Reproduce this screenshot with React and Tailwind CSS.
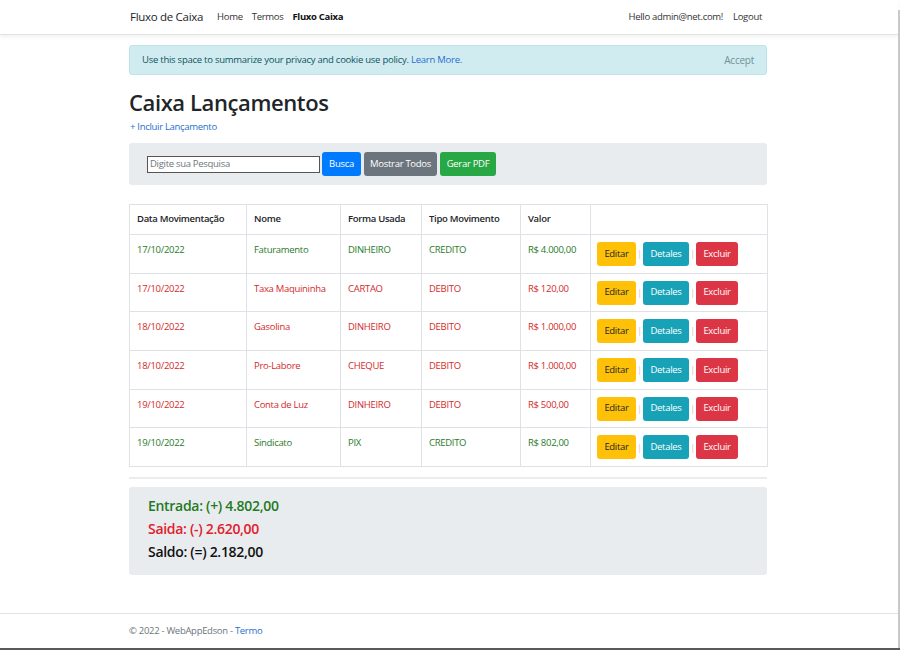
import React from "react";

const rows = [
  { d: "17/10/2022", n: "Faturamento", f: "DINHEIRO", t: "CREDITO", v: "R$ 4.000,00", c: true },
  { d: "17/10/2022", n: "Taxa Maquininha", f: "CARTAO", t: "DEBITO", v: "R$ 120,00", c: false },
  { d: "18/10/2022", n: "Gasolina", f: "DINHEIRO", t: "DEBITO", v: "R$ 1.000,00", c: false },
  { d: "18/10/2022", n: "Pro-Labore", f: "CHEQUE", t: "DEBITO", v: "R$ 1.000,00", c: false },
  { d: "19/10/2022", n: "Conta de Luz", f: "DINHEIRO", t: "DEBITO", v: "R$ 500,00", c: false },
  { d: "19/10/2022", n: "Sindicato", f: "PIX", t: "CREDITO", v: "R$ 802,00", c: true },
];

export default function App() {
  return (
    <div className="w-[900px] h-[650px] flex flex-col bg-white overflow-hidden text-[#212529]" style={{ fontFamily: '"Open Sans", "Noto Sans", sans-serif' }}>
      <div className="flex flex-1 min-h-0">
        <div className="flex-1 flex flex-col min-w-0">
          <nav className="h-[35px] shrink-0 border-b border-[#e3e3e3] shadow-[0_2px_4px_rgba(0,0,0,0.06)] bg-white">
            <div className="w-[638px] ml-[129px] h-full flex items-center">
              <span className="text-[11.5px] tracking-[-0.3px] text-[#212529] ml-px">Fluxo de Caixa</span>
              <div className="flex items-center gap-[9px] ml-[14px] text-[9.5px] tracking-[-0.3px]">
                <span className="text-[#333]">Home</span>
                <span className="text-[#333]">Termos</span>
                <span className="font-bold text-[#111]">Fluxo Caixa</span>
              </div>
              <div className="ml-auto flex items-center gap-[10px] text-[9.5px] tracking-[-0.3px] mr-[5px]">
                <span className="text-[#333]">Hello admin@net.com!</span>
                <span className="text-[#333]">Logout</span>
              </div>
            </div>
          </nav>

          <main className="w-[638px] ml-[129px] flex flex-col">
            <div className="mt-[10px] h-[30px] rounded-[3px] bg-[#d1ecf1] border border-[#bee5eb] flex items-center px-[12px] text-[9.5px] tracking-[-0.25px] text-[#0c5460]">
              <span>
                Use this space to summarize your privacy and cookie use policy.{" "}
                <span className="text-[#1f6fcf]">Learn More.</span>
              </span>
              <span className="ml-auto text-[#6e9196] text-[10px]">Accept</span>
            </div>

            <h1 className="mt-[12px] text-[22px] leading-[30px] font-semibold tracking-[-0.4px] text-[#212529]">Caixa Lançamentos</h1>
            <span className="mt-[2px] text-[9.5px] leading-[15px] text-[#1f6fcf] tracking-[-0.3px] ml-px">+ Incluir Lançamento</span>

            <div className="mt-[9px] h-[42px] rounded-[3px] bg-[#e9ecef] flex items-center px-[18px]">
              <div className="w-[173px] h-[17px] border border-[#555] bg-white flex items-center px-[2px] text-[9.5px] text-[#6c757d] tracking-[-0.3px]">
                Digite sua Pesquisa
              </div>
              <div className="ml-[2px] h-[24px] w-[39px] justify-center rounded-[3px] bg-[#007bff] text-white text-[9.5px] tracking-[-0.3px] flex items-center">Busca</div>
              <div className="ml-[3px] h-[24px] w-[73px] justify-center rounded-[3px] bg-[#6c757d] text-white text-[9.5px] tracking-[-0.3px] flex items-center">Mostrar Todos</div>
              <div className="ml-[3px] h-[24px] w-[56px] justify-center rounded-[3px] bg-[#28a745] text-white text-[9.5px] tracking-[-0.3px] flex items-center">Gerar PDF</div>
            </div>

            <table className="mt-[19px] w-[638px] border-collapse table-fixed text-[9.5px] tracking-[-0.3px]">
              <colgroup>
                <col className="w-[117px]" />
                <col className="w-[94px]" />
                <col className="w-[81px]" />
                <col className="w-[99px]" />
                <col className="w-[70px]" />
                <col className="w-[177px]" />
              </colgroup>
              <thead>
                <tr className="h-[30px]">
                  {["Data Movimentação", "Nome", "Forma Usada", "Tipo Movimento", "Valor", ""].map((h, i) => (
                    <th key={i} className="border border-[#dee2e6] text-left font-semibold px-[7px] align-middle text-[#212529]">{h}</th>
                  ))}
                </tr>
              </thead>
              <tbody>
                {rows.map((r, i) => {
                  const col = r.c ? "text-[#2a7a2a]" : "text-[#d42a2a]";
                  return (
                    <tr key={i} className="h-[38.7px]">
                      {[r.d, r.n, r.f, r.t, r.v].map((v, j) => (
                        <td key={j} className={`border border-[#dee2e6] px-[7px] pt-[7px] align-top leading-[15px] ${col}`}>{v}</td>
                      ))}
                      <td className="border border-[#dee2e6] px-[6px] align-middle">
                        <div className="flex items-center">
                          <div className="h-[24px] w-[39px] justify-center rounded-[3px] bg-[#ffc107] text-[#212529] flex items-center">Editar</div>
                          <span className="w-[7px] text-center text-[#e0b8bd] text-[9px]">|</span>
                          <div className="h-[24px] w-[46px] justify-center rounded-[3px] bg-[#17a2b8] text-white flex items-center">Detales</div>
                          <span className="w-[7px] text-center text-[#e0b8bd] text-[9px]">|</span>
                          <div className="h-[24px] w-[42px] justify-center rounded-[3px] bg-[#dc3545] text-white flex items-center">Excluir</div>
                        </div>
                      </td>
                    </tr>
                  );
                })}
              </tbody>
            </table>

            <div className="mt-[10px] h-[2px] bg-[#ececec]" />

            <div className="mt-[8px] h-[88px] rounded-[3px] bg-[#e9ecef] px-[19px] pt-[10px] flex flex-col gap-[5px] text-[14px] leading-[18px] tracking-[-0.3px] font-semibold">
              <span className="text-[#1f7a1f]">Entrada: (+) 4.802,00</span>
              <span className="text-[#e0202a]">Saida: (-) 2.620,00</span>
              <span className="text-[#111]">Saldo: (=) 2.182,00</span>
            </div>
          </main>

          <footer className="mt-auto h-[35px] border-t border-[#e3e3e3]">
            <div className="w-[638px] ml-[129px] pt-[10px] text-[9.5px] tracking-[-0.3px] text-[#6c757d]">
              © 2022 - WebAppEdson - <span className="text-[#1f6fcf]">Termo</span>
            </div>
          </footer>
        </div>
        <div className="w-[2px] mt-[10px] bg-[#c9c9c9] shrink-0" />
      </div>
      <div className="h-[2px] bg-[#5a5a5a] shrink-0" />
    </div>
  );
}
